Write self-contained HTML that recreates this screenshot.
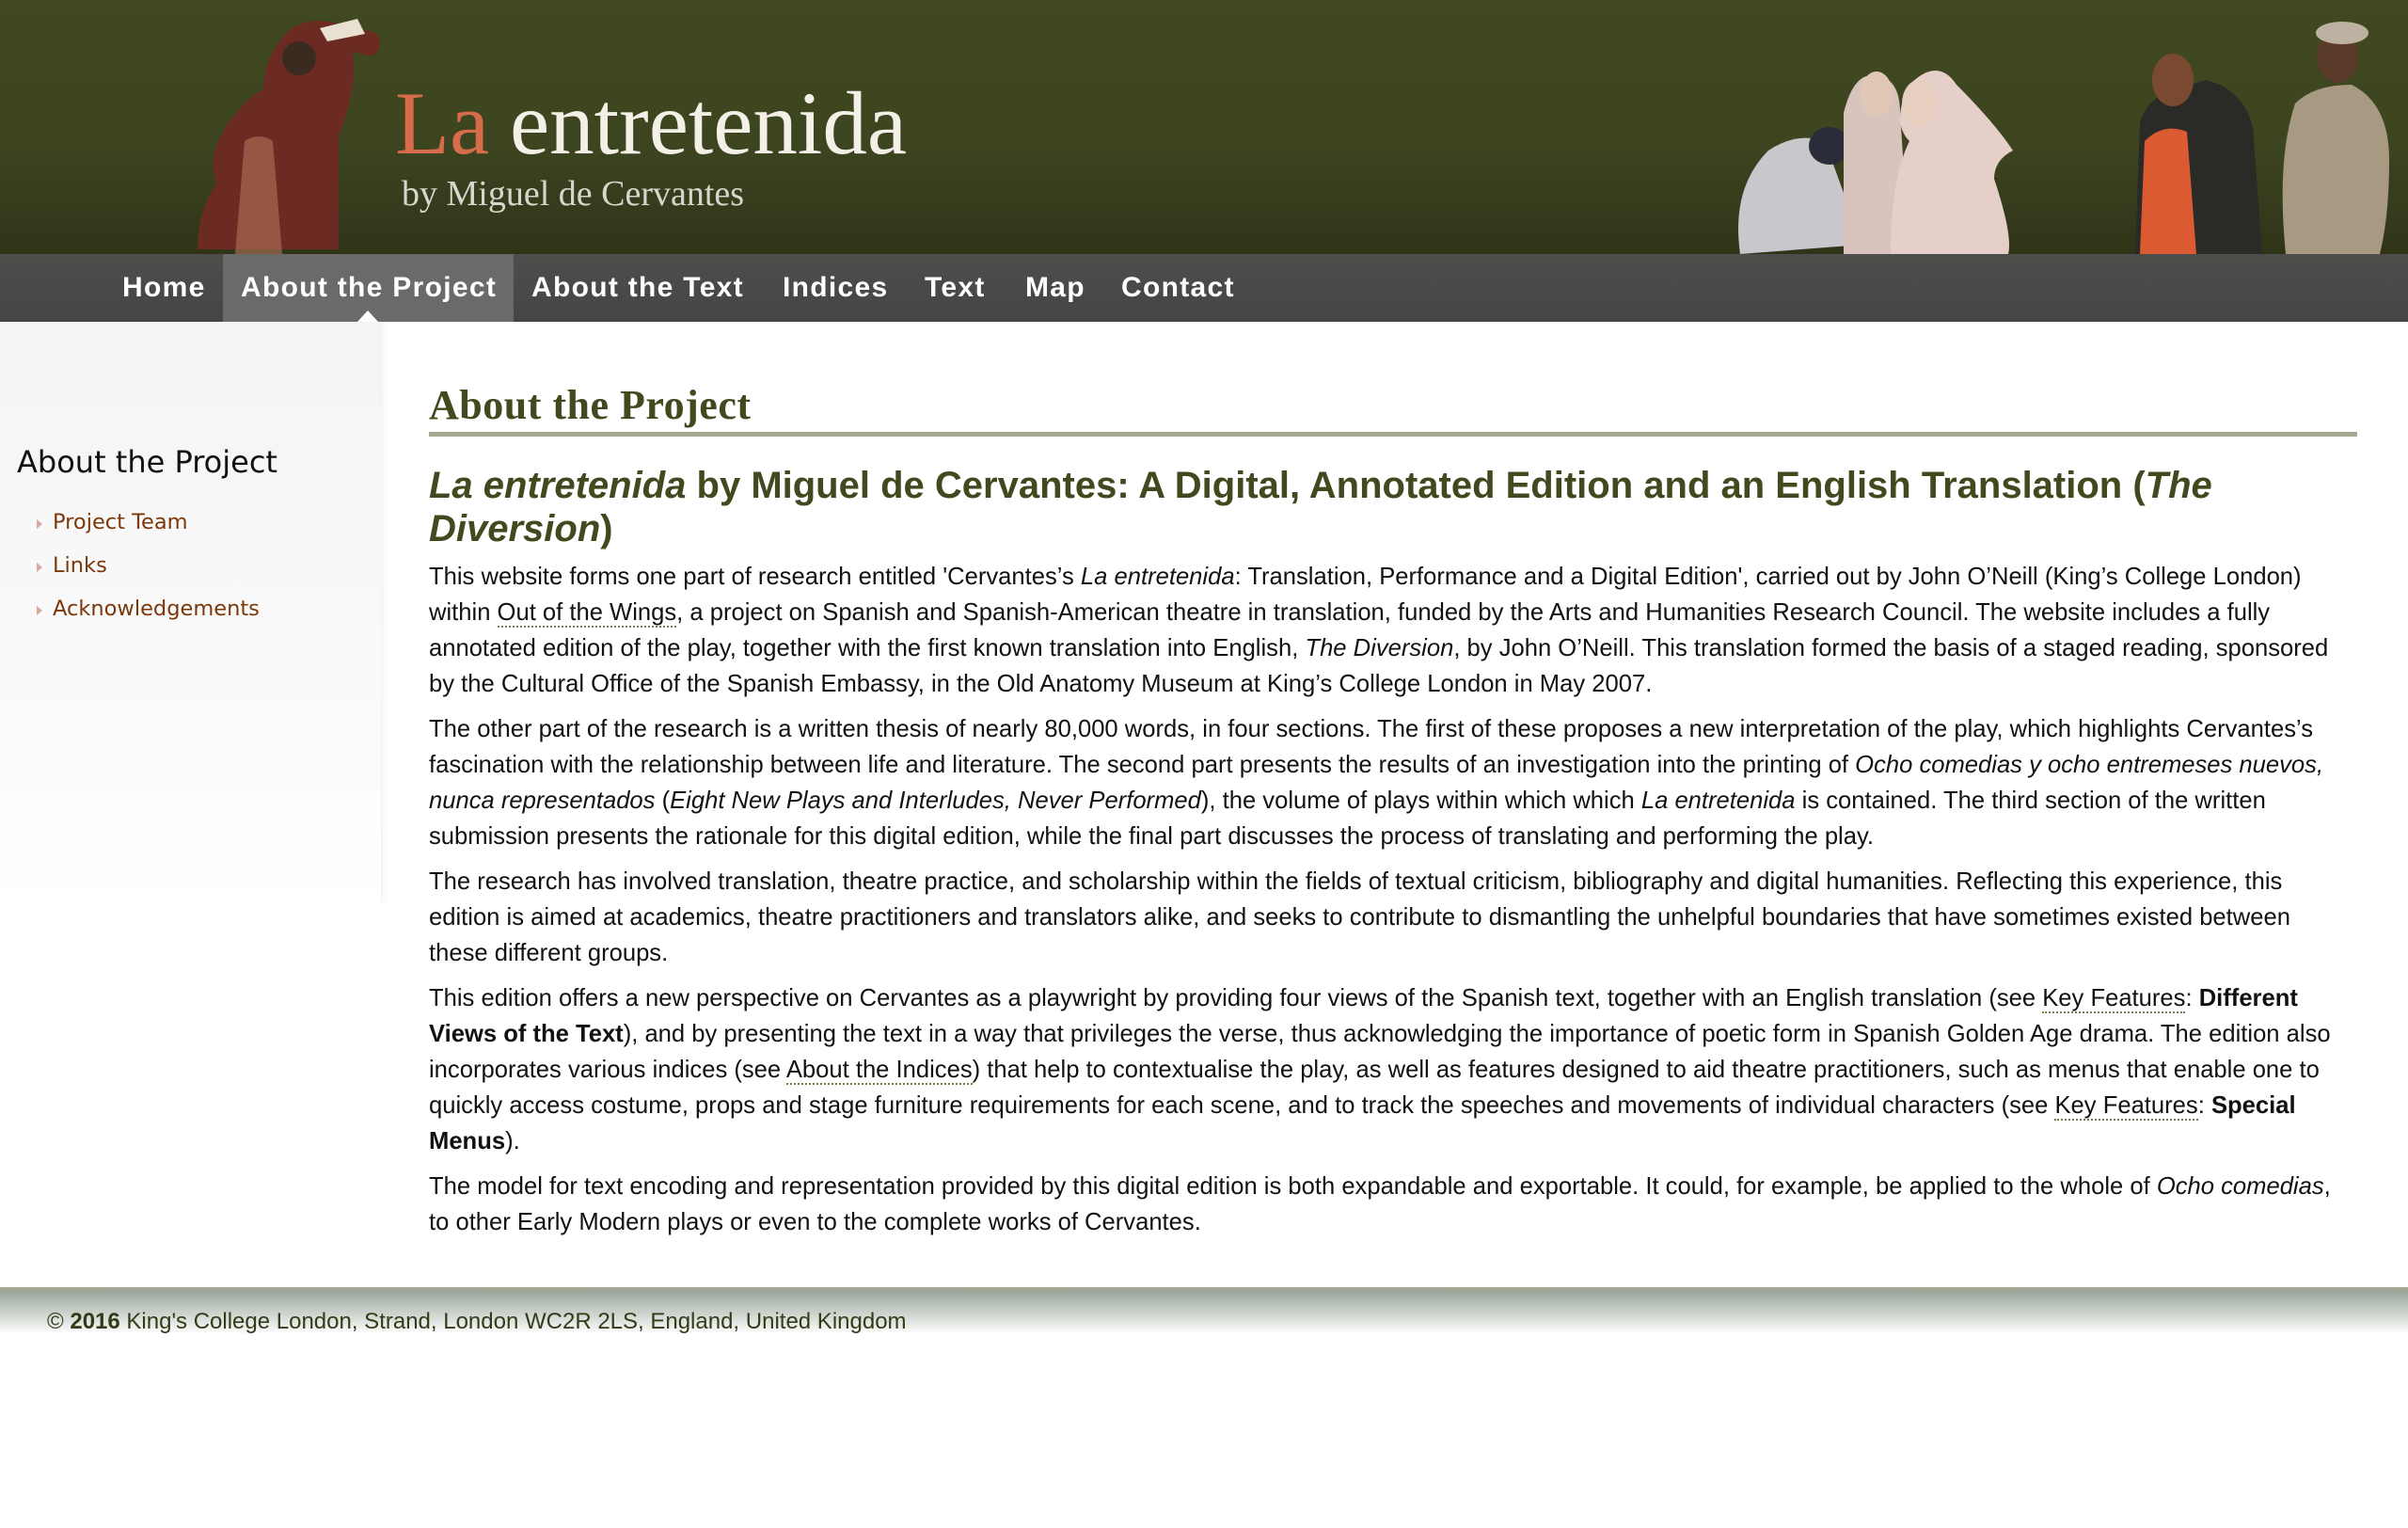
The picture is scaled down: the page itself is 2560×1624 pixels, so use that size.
<!DOCTYPE html>
<html><head><meta charset="utf-8">
<style>
*{margin:0;padding:0;box-sizing:border-box}
body{width:2560px;height:1624px;background:#fff;font-family:"Liberation Sans",Arial,sans-serif;position:relative;overflow:hidden}
#hdr{position:absolute;left:0;top:0;width:2560px;height:270px;background:linear-gradient(#414922 0%,#3d4520 55%,#2f3418 100%)}
#nav{position:absolute;left:0;top:270px;width:2560px;height:72px;background:linear-gradient(#4d4e4b,#454644)}
#act{position:absolute;left:237px;top:270px;width:309px;height:72px;background:#6a6b68}
#tri{position:absolute;left:380px;top:330px;width:0;height:0;border-left:11px solid transparent;border-right:11px solid transparent;border-bottom:12px solid #fff}
.n{position:absolute;top:0;line-height:72px;color:#fff;font-weight:bold;font-size:30px;letter-spacing:1.3px;white-space:nowrap}
#side{position:absolute;left:0;top:342px;width:405px;height:620px;background:linear-gradient(180deg,#f4f4f4,#fafafa 60%,#fff);box-shadow:4px 0 6px -3px rgba(0,0,0,0.08)}
#side h3{position:absolute;left:18px;top:130px;font-family:"DejaVu Sans",Verdana,sans-serif;font-weight:normal;font-size:32px;color:#111;white-space:nowrap}
#side a{position:absolute;left:56px;font-family:"DejaVu Sans",Verdana,sans-serif;font-size:22.5px;color:#7c380a;text-decoration:none;white-space:nowrap}
#side i{position:absolute;left:39px;width:0;height:0;border-top:5px solid transparent;border-bottom:5px solid transparent;border-left:6px solid #d8a89a}
#main{position:absolute;left:456px;top:400px;width:2050px}
h1{font-family:"Liberation Serif",Georgia,serif;font-size:44px;color:#414a1f;font-weight:bold;line-height:62px;height:64px;border-bottom:5px solid #a6a892;letter-spacing:0.5px}
h2{margin-top:29px;font-size:40px;line-height:46px;color:#414a1f;font-weight:bold;white-space:nowrap}
p{font-size:25.6px;line-height:38px;color:#111;margin-top:10px;white-space:nowrap}
h2+p{margin-top:9px}
u{text-decoration:none;border-bottom:2px dotted #7a7a4a}
#foot{position:absolute;left:0;top:1368px;width:2560px;height:50px;border-top:3px solid #a9a894;background:linear-gradient(#96a49a,#d4dad4 60%,#fff)}
#foot div{position:absolute;left:50px;top:20px;font-size:24px;color:#343b18}
</style></head><body>
<div id="hdr">
<svg width="2560" height="270" style="position:absolute;left:0;top:0">
 <g>
  <path d="M300 40 q20 -25 60 -15 l40 10 q10 15 -5 25 l-20 -5 q5 40 -15 90 l0 120 l-150 0 q0 -40 20 -70 q-10 -30 10 -60 q20 -30 40 -40 q0 -30 20 -55z" fill="#6b2a22"/>
  <path d="M260 150 q15 -10 30 0 l10 120 l-50 0z" fill="#b0765a" opacity=".6"/>
  <circle cx="318" cy="62" r="18" fill="#3a2a1f"/>
  <path d="M340 30 l40 -10 l8 16 l-40 8z" fill="#e8e0d0"/>
 </g>
 <text x="420" y="163" font-family="Liberation Serif,serif" font-size="95" fill="#d86b4a">La</text>
 <text x="542" y="163" font-family="Liberation Serif,serif" font-size="95" fill="#f4f0e8">entretenida</text>
 <text x="427" y="218" font-family="Liberation Serif,serif" font-size="38" fill="#d8d6cc">by Miguel de Cervantes</text>
 <path d="M1850 270 q-10 -70 30 -110 q30 -20 60 -10 l40 110z" fill="#c9c6cc"/>
 <ellipse cx="1945" cy="155" rx="22" ry="20" fill="#2a2c3a"/>
 <path d="M1960 270 l0 -150 q10 -40 30 -40 q30 0 30 40 l10 150z" fill="#d8c4bc"/>
 <ellipse cx="1995" cy="100" rx="17" ry="24" fill="#e0c8b4"/>
 <path d="M2010 270 q0 -80 20 -120 q-20 -20 0 -60 q30 -30 50 0 q40 40 60 70 q-20 10 -20 30 q20 60 15 80z" fill="#e6cfc8"/>
 <ellipse cx="2040" cy="110" rx="18" ry="25" fill="#e8d0c0"/>
 <path d="M2270 270 l5 -140 q10 -30 40 -35 l30 -10 q40 10 50 50 l10 135z" fill="#2a2a26"/>
 <path d="M2275 270 l5 -120 q20 -20 45 -10 l10 130z" fill="#dc5a32"/>
 <ellipse cx="2310" cy="85" rx="22" ry="28" fill="#7a4a30"/>
 <path d="M2430 270 q-10 -100 10 -160 q20 -20 60 -20 q40 20 40 80 q0 60 -10 100z" fill="#a89a82"/>
 <ellipse cx="2485" cy="60" rx="22" ry="28" fill="#5a3a28"/>
 <ellipse cx="2490" cy="35" rx="28" ry="12" fill="#bdb2a2"/>
</svg>
</div>
<div id="nav"></div>
<div id="act"></div>
<div id="tri"></div>
<div style="position:absolute;left:0;top:270px;width:2560px;height:72px">
<span class="n" style="left:130px">Home</span>
<span class="n" style="left:256px">About the Project</span>
<span class="n" style="left:565px">About the Text</span>
<span class="n" style="left:832px">Indices</span>
<span class="n" style="left:983px">Text</span>
<span class="n" style="left:1090px">Map</span>
<span class="n" style="left:1192px">Contact</span>
</div>
<div id="side">
<h3>About the Project</h3>
<i style="top:210px"></i><a style="top:200px">Project Team</a>
<i style="top:256px"></i><a style="top:246px">Links</a>
<i style="top:302px"></i><a style="top:292px">Acknowledgements</a>
</div>
<div id="main">
<h1>About the Project</h1>
<h2><i>La entretenida</i> by Miguel de Cervantes: A Digital, Annotated Edition and an English Translation (<i>The</i><br><i>Diversion</i>)</h2>
<p>This website forms one part of research entitled 'Cervantes’s <i>La entretenida</i>: Translation, Performance and a Digital Edition', carried out by John O’Neill (King’s College London)<br>within <u>Out of the Wings</u>, a project on Spanish and Spanish-American theatre in translation, funded by the Arts and Humanities Research Council. The website includes a fully<br>annotated edition of the play, together with the first known translation into English, <i>The Diversion</i>, by John O’Neill. This translation formed the basis of a staged reading, sponsored<br>by the Cultural Office of the Spanish Embassy, in the Old Anatomy Museum at King’s College London in May 2007.</p>
<p>The other part of the research is a written thesis of nearly 80,000 words, in four sections. The first of these proposes a new interpretation of the play, which highlights Cervantes’s<br>fascination with the relationship between life and literature. The second part presents the results of an investigation into the printing of <i>Ocho comedias y ocho entremeses nuevos,</i><br><i>nunca representados</i> (<i>Eight New Plays and Interludes, Never Performed</i>), the volume of plays within which which <i>La entretenida</i> is contained. The third section of the written<br>submission presents the rationale for this digital edition, while the final part discusses the process of translating and performing the play.</p>
<p>The research has involved translation, theatre practice, and scholarship within the fields of textual criticism, bibliography and digital humanities. Reflecting this experience, this<br>edition is aimed at academics, theatre practitioners and translators alike, and seeks to contribute to dismantling the unhelpful boundaries that have sometimes existed between<br>these different groups.</p>
<p>This edition offers a new perspective on Cervantes as a playwright by providing four views of the Spanish text, together with an English translation (see <u>Key Features</u>: <b>Different</b><br><b>Views of the Text</b>), and by presenting the text in a way that privileges the verse, thus acknowledging the importance of poetic form in Spanish Golden Age drama. The edition also<br>incorporates various indices (see <u>About the Indices</u>) that help to contextualise the play, as well as features designed to aid theatre practitioners, such as menus that enable one to<br>quickly access costume, props and stage furniture requirements for each scene, and to track the speeches and movements of individual characters (see <u>Key Features</u>: <b>Special</b><br><b>Menus</b>).</p>
<p>The model for text encoding and representation provided by this digital edition is both expandable and exportable. It could, for example, be applied to the whole of <i>Ocho comedias</i>,<br>to other Early Modern plays or even to the complete works of Cervantes.</p>
</div>
<div id="foot"><div>© <b>2016</b> King's College London, Strand, London WC2R 2LS, England, United Kingdom</div></div>
</body></html>
